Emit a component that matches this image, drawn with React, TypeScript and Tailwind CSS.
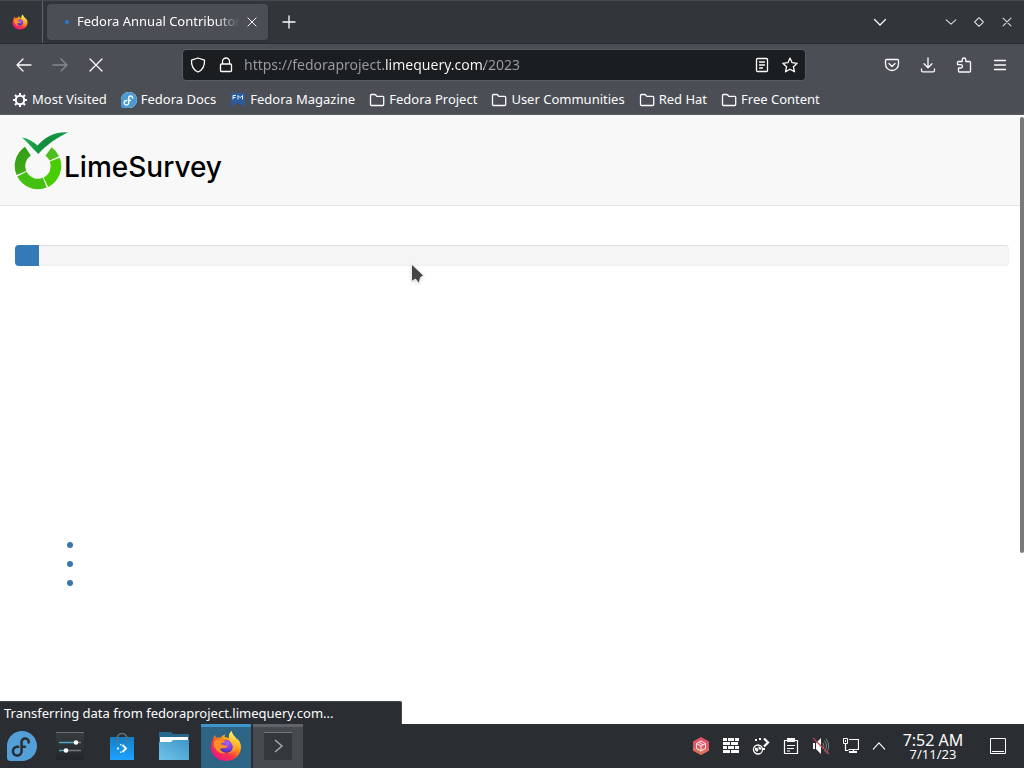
import React, { useState } from "react";
import { SiFedora } from "react-icons/si";

type IconProps = {
    className?: string;
};

type Bookmark = {
    title: string;
    icon: React.ReactNode;
};

function Stroke({ children, className = "size-4" }: IconProps & { children: React.ReactNode }) {
    return (
        <svg viewBox="0 0 16 16" className={className} fill="none" stroke="currentColor" strokeWidth="1.3" strokeLinecap="round" strokeLinejoin="round" aria-hidden="true">
            {children}
        </svg>
    );
}

function FirefoxIcon({ className }: IconProps) {
    return (
        <svg viewBox="0 0 32 32" className={className} aria-hidden="true">
            <defs>
                <linearGradient id="fxBody" x1="0.85" y1="0.1" x2="0.2" y2="0.95">
                    <stop offset="0" stopColor="#fff44f" />
                    <stop offset="0.35" stopColor="#ff980e" />
                    <stop offset="0.65" stopColor="#ff3647" />
                    <stop offset="1" stopColor="#e31587" />
                </linearGradient>
                <linearGradient id="fxFlame" x1="0.6" y1="0" x2="0.4" y2="1">
                    <stop offset="0" stopColor="#fff36e" />
                    <stop offset="0.5" stopColor="#ffbd2e" />
                    <stop offset="1" stopColor="#ff7139" />
                </linearGradient>
                <radialGradient id="fxGlobe" cx="0.6" cy="0.25" r="0.8">
                    <stop offset="0" stopColor="#b05cff" />
                    <stop offset="0.6" stopColor="#6e3fd8" />
                    <stop offset="1" stopColor="#45278d" />
                </radialGradient>
            </defs>
            <path fill="url(#fxBody)" d="M3.4 8.5c.3-1.8 1-3 1.5-3.500.3 1.300 1 2.300 1.900 3 1.200-.5 2.700-.6 4-.3C12 6 13.500 5 15.200 4.600c-.5.9-.6 1.700-.5 2.400L19 8c-.2-3 .8-5.500 2.800-7 .2 3 1.700 4.300 3.700 6.400.9.900 1.500 1.900 1.900 2.800 0-.8-.1-1.400-.4-2 2.500 2.300 4 5.500 4 8.900 0 8-6.500 14-15 14S1 25 1 17.500c0-3.500 1-6.600 2.400-9z" />
            <circle cx="16.200" cy="16.500" r="6.700" fill="url(#fxGlobe)" />
            <path fill="url(#fxFlame)" d="M21.800 1c.2 3 1.700 4.300 3.700 6.400 3.200 3.600 2.800 10.200-.9 13.600-2.400 2.200-5.800 2.800-8.600 1.700 4.400.1 7.100-2.600 6.900-6-.2-3.700-4.500-5.200-4-10.200.1-2.300 1.200-4.300 2.900-5.500z" />
            <path fill="#ff9124" d="M4.200 11.500c1.600-2 4.700-2.600 6.900-1.500 1.500-.3 3 .2 4 1.400-.4 1-1.700 1.300-3.100 1.600-.9.300-1 1-.9 1.700 1.300-.3 2.600.2 3.600.8 1 .5 2.300.4 3.200-.1-.8 1.900-2.200 2.600-4.100 2.700-1.600.1-2.600.7-4 .7 1.300 2.700 4.100 4.300 7.200 4-4.700 2.300-11.500-.8-12-6.200-.4.400-.7 1.200-.8 1.900-.5-2.700-.6-4.900 0-7z" />
        </svg>
    );
}

function arc(from: number, to: number) {
    const cx = 24;
    const cy = 36;
    const r = 18;
    const point = (deg: number) => {
        const a = (deg * Math.PI) / 180;
        return `${(cx + r * Math.cos(a)).toFixed(2)} ${(cy + r * Math.sin(a)).toFixed(2)}`;
    };
    return `M${point(from)}A${r} ${r} 0 0 1 ${point(to)}`;
}

function LimeLogo() {
    return (
        <svg viewBox="0 0 54 60" className="h-[60px] w-[54px]" fill="none" aria-hidden="true">
            <defs>
                <linearGradient id="limeLeft" x1="0" y1="0" x2="0.3" y2="1">
                    <stop offset="0" stopColor="#349c18" />
                    <stop offset="1" stopColor="#3fac14" />
                </linearGradient>
                <linearGradient id="limeCheck" x1="0" y1="0" x2="1" y2="0">
                    <stop offset="0" stopColor="#22b14c" />
                    <stop offset="0.5" stopColor="#118a3c" />
                    <stop offset="1" stopColor="#15a04a" />
                </linearGradient>
            </defs>
            <path d={arc(-54, -25)} stroke="#4cbf1c" strokeWidth="10.500" />
            <path d={arc(-21, 64)} stroke="#48cc02" strokeWidth="10.500" />
            <path d={arc(68, 153)} stroke="#43c010" strokeWidth="10.500" />
            <path d={arc(157, 236)} stroke="url(#limeLeft)" strokeWidth="10.500" />
            <path d="M8 7.500c6 1 11.500 4 15.500 8C30 8 40 1.500 54 2.300 43 8 32 15 24.300 24 19.500 19.500 14 12.500 8 7.500z" fill="url(#limeCheck)" />
        </svg>
    );
}

function FolderIcon() {
    return (
        <Stroke>
            <path d="M1.500 12.500v-9q0-1 1-1h3.200q.6 0 1 .5l1 1.300h6q1 0 1 1v7.200q0 1-1 1H2.500q-1 0-1-1z" />
        </Stroke>
    );
}

const bookmarks: Bookmark[] = [
    {
        title: "Most Visited",
        icon: (
            <svg viewBox="0 0 16 16" className="size-4" fill="none" stroke="currentColor" aria-hidden="true">
                <circle cx="8" cy="8" r="4.200" strokeWidth="2" />
                <path strokeWidth="2" d="M8 1v3M8 12v3M1 8h3M12 8h3M3 3l2.200 2.200M10.800 10.800 13 13M3 13l2.200-2.200M10.800 5.200 13 3" />
            </svg>
        ),
    },
    {
        title: "Fedora Docs",
        icon: (
            <span className="block size-4 rounded-full bg-white">
                <SiFedora className="size-4 text-[#4a9bd4]" />
            </span>
        ),
    },
    {
        title: "Fedora Magazine",
        icon: (
            <svg viewBox="0 0 16 16" className="size-4" aria-hidden="true">
                <path d="M1 1h14v14l-7-4-7 4z" fill="#2c5a9c" />
                <path d="M3 7.500V3.500h3M3 5.500h2.500M8 7.500v-4l2.200 2.200 2.300-2.200v4" fill="none" stroke="#dff3fb" strokeWidth="1" />
            </svg>
        ),
    },
    { title: "Fedora Project", icon: <FolderIcon /> },
    { title: "User Communities", icon: <FolderIcon /> },
    { title: "Red Hat", icon: <FolderIcon /> },
    { title: "Free Content", icon: <FolderIcon /> },
];

function TabBar() {
    return (
        <div className="flex h-11 items-center border-t border-[#454a4f] border-b border-b-[#272b30] bg-[#31363b]">
            <button aria-label="Firefox View" className="flex h-full w-[43px] items-center justify-center border-r border-[#60646a] pr-0.5">
                <FirefoxIcon className="size-4" />
            </button>
            <div className="ml-1 flex h-9 w-[221px] items-center rounded bg-[#4b4f55] pl-[18px] shadow">
                <span className="size-1 shrink-0 rounded-full bg-[#2a79d8]" />
                <span className="ml-2 flex-1 overflow-hidden whitespace-nowrap mask-r-from-85%">Fedora Annual Contributor</span>
                <button aria-label="Close tab" className="flex w-7 justify-center pr-1">
                    <Stroke className="size-3"><path d="m2.500 2.500 11 11M13.500 2.500l-11 11" /></Stroke>
                </button>
            </div>
            <button aria-label="New tab" className="flex w-[42px] justify-center">
                <Stroke><path d="M8 2v12M2 8h12" /></Stroke>
            </button>
            <button aria-label="List all tabs" className="mr-[39px] ml-auto flex w-9 justify-center">
                <Stroke><path d="m2.500 5.500 5.500 5.500 5.500-5.500" /></Stroke>
            </button>
            <div className="flex pr-[3px] text-[#d8dadc]">
                <button aria-label="Minimize" className="flex w-7 justify-center">
                    <Stroke className="size-3.5"><path d="m2.500 5.500 5.500 5 5.500-5" /></Stroke>
                </button>
                <button aria-label="Maximize" className="flex w-7 justify-center">
                    <Stroke className="size-3.5"><path d="m8 3 5 5-5 5-5-5z" /></Stroke>
                </button>
                <button aria-label="Close" className="flex w-7 justify-center">
                    <Stroke className="size-3.5"><path d="m3.500 3.500 9 9M12.500 3.500l-9 9" /></Stroke>
                </button>
            </div>
        </div>
    );
}

function NavBar() {
    const [url, setUrl] = useState("https://fedoraproject.limequery.com/2023");

    return (
        <div className="flex h-[41px] items-center px-1.5">
            <button aria-label="Back" className="flex w-9 justify-center">
                <Stroke><path d="M15 8H1.500M7 2 1 8l6 6" /></Stroke>
            </button>
            <button aria-label="Forward" className="flex w-9 justify-center text-[#86898d]">
                <Stroke><path d="M1 8h13.500M9 2l6 6-6 6" /></Stroke>
            </button>
            <button aria-label="Stop" className="flex w-9 justify-center">
                <Stroke><path d="m2 2 12 12M14 2 2 14" /></Stroke>
            </button>
            <div className="mx-[68px] flex h-8 flex-1 items-center rounded border border-[#5a5e64] bg-[#1b1e20] px-[7px]">
                <Stroke className="mr-3 size-4"><path d="M8 1 14.500 3.200c.3 5-1.500 9.500-6.500 11.800C3 12.700 1.200 8.200 1.500 3.200z" /></Stroke>
                <Stroke className="mr-2.5 size-4"><path d="M4.500 7V4.500a3.500 3.500 0 0 1 7 0V7M3.500 7h9q1 0 1 1v5.500q0 1-1 1h-9q-1 0-1-1V8q0-1 1-1z" /></Stroke>
                <input
                    aria-label="Address"
                    value={url}
                    onChange={e => setUrl(e.target.value)}
                    className="min-w-0 flex-1 bg-[linear-gradient(to_right,#9b9da0_142px,#fcfcfc_142px,#fcfcfc_240px,#9b9da0_240px)] bg-clip-text text-sm text-transparent caret-white outline-none"
                />
                <button aria-label="Reader view" className="mr-3">
                    <Stroke><path d="M3.500 1.500h9q1 0 1 1v11q0 1-1 1h-9q-1 0-1-1v-11q0-1 1-1zM5.500 5h5M5.500 8h5M5.500 11h3" /></Stroke>
                </button>
                <button aria-label="Bookmark this page">
                    <Stroke><path d="m8 1 2.100 4.700 5.100.6-3.800 3.400 1.100 5.100L8 12.200l-4.500 2.600 1.100-5.100L.8 6.300l5.100-.6z" /></Stroke>
                </button>
            </div>
            <button aria-label="Pocket" className="flex w-9 justify-center">
                <Stroke><path d="M2.500 2.500h11q1 0 1 1V7a6.500 6.500 0 0 1-13 0V3.500q0-1 1-1zM5 6.500l3 3 3-3" /></Stroke>
            </button>
            <button aria-label="Downloads" className="flex w-9 justify-center">
                <Stroke><path d="M8 .8v9.700M4 6.800l4 4 4-4M1.500 12v1.500q0 1.300 1.300 1.300h10.400q1.300 0 1.300-1.300V12" /></Stroke>
            </button>
            <button aria-label="Extensions" className="flex w-9 justify-center">
                <Stroke><path d="M2.500 4.500h3.700V2.800a1.800 1.800 0 0 1 3.600 0v1.700h3.700q1 0 1 1v8.700q0 .8-1 .8h-10q-1 0-1-1v-3h2.300a1.600 1.600 0 0 0 0-3.300H1.500V5.500q0-1 1-1z" /></Stroke>
            </button>
            <button aria-label="Menu" className="flex w-9 justify-center">
                <Stroke><path d="M2.500 3.500h11M2.500 8h11M2.500 12.500h11" /></Stroke>
            </button>
        </div>
    );
}

function Page() {
    return (
        <main className="relative flex-1 bg-white">
            <header className="flex h-[91px] items-center border-b border-[#e3e3e3] bg-[#f8f8f8] px-3.5">
                <a href="#" className="flex items-center text-black">
                    <LimeLogo />
                    <span className="mt-3.5 -ml-1 font-[Inter,sans-serif] text-[28px] leading-9 font-medium">LimeSurvey</span>
                </a>
            </header>
            <div className="px-[15px] pt-[39px]">
                <div role="progressbar" aria-label="Survey progress" aria-valuenow={2} className="h-[21px] rounded border border-t-[#dedede] border-[#f0f0f0] bg-[#f5f5f5]">
                    <div className="-m-px h-[21px] w-6 rounded-l bg-[#337ab7]" />
                </div>
            </div>
            <ul className="mt-[276px] flex flex-col gap-[13px] pl-[67px]">
                <li className="size-1.5 rounded-full bg-[#3a76ab]" />
                <li className="size-1.5 rounded-full bg-[#3a76ab]" />
                <li className="size-1.5 rounded-full bg-[#3a76ab]" />
            </ul>
            <div className="absolute top-0.5 right-0 h-[436px] w-1 rounded-sm bg-[#77797b]" />
            <svg viewBox="0 0 14 22" className="absolute top-[148px] left-[410px] h-[22px] w-3.5 drop-shadow" aria-hidden="true">
                <path d="M1.500 1v17.500L5.500 16l3.500 4.500 1.500-6 3-2z" fill="#434547" stroke="#fff" strokeWidth="0.800" />
            </svg>
            <div role="status" className="absolute bottom-0 left-0 h-[23px] w-[402px] rounded-tr-xs border-t border-r border-[#44484c] bg-[#2a2e32] pl-1 leading-[22px]">
                Transferring data from fedoraproject.limequery.com...
            </div>
        </main>
    );
}

function Taskbar() {
    return (
        <footer className="flex h-11 items-stretch bg-[#2a2e32]">
            <div className="flex gap-0.5">
                <button aria-label="Application launcher" className="flex w-[43px] items-center justify-center">
                    <SiFedora className="size-[30px] text-[#549fd8]" />
                </button>
                <button aria-label="System Settings" className="flex w-[50px] items-center justify-center">
                    <svg viewBox="0 0 28 28" className="size-7" aria-hidden="true">
                        <defs>
                            <linearGradient id="tile" x1="0" y1="0" x2="0" y2="1">
                                <stop offset="0" stopColor="#383c3f" />
                                <stop offset="1" stopColor="#23272a" />
                            </linearGradient>
                        </defs>
                        <path d="M0 0h28v28H0z" fill="url(#tile)" />
                        <path d="M0 .5h28" stroke="#6a6e71" />
                        <path d="M3 10.500h15M3 18.500h7" stroke="#4fa6c8" strokeWidth="1.500" />
                        <path d="M20 10.500h5M10 18.500h15" stroke="#777c80" strokeWidth="1.500" />
                        <circle cx="20" cy="10.500" r="2.300" fill="#fff" />
                        <circle cx="10" cy="18.500" r="2.300" fill="#fff" />
                    </svg>
                </button>
                <button aria-label="Discover" className="flex w-[50px] items-center justify-center">
                    <svg viewBox="0 0 28 28" className="size-7" aria-hidden="true">
                        <defs>
                            <linearGradient id="bag" x1="0" y1="0" x2="0" y2="1">
                                <stop offset="0" stopColor="#157fc4" />
                                <stop offset="1" stopColor="#1fa2ff" />
                            </linearGradient>
                        </defs>
                        <path d="M2 5h24v23H2z" fill="url(#bag)" />
                        <path d="M9 11V6.500a5 5 0 0 1 10 0V11" fill="none" stroke="#5b7383" strokeWidth="1.500" />
                        <path d="m14.500 13 3.500 3.500-3.500 3.500" fill="none" stroke="#fff" strokeWidth="1.800" />
                        <path d="M9 15.500h2v2H9zM12 12h1.500v1.500H12zM12 19.500h1.500V21H12z" fill="#e4f5ff" />
                    </svg>
                </button>
                <button aria-label="Dolphin" className="flex w-[50px] items-center justify-center">
                    <svg viewBox="0 0 30 28" className="h-7 w-[30px]" aria-hidden="true">
                        <defs>
                            <linearGradient id="folder" x1="0" y1="1" x2="1" y2="0">
                                <stop offset="0" stopColor="#6fc5ea" />
                                <stop offset="1" stopColor="#3f96c6" />
                            </linearGradient>
                        </defs>
                        <path d="M0 0h12l2 2h16v22H0z" fill="#28688e" />
                        <path d="M1 5h28v8H1z" fill="#fff" />
                        <path d="M0 10h12l2-2h16v20H0z" fill="url(#folder)" />
                    </svg>
                </button>
                <button aria-label="Firefox" className="flex w-[50px] items-center justify-center border-t-3 border-[#3f96cc] bg-[#2e6484] pb-1">
                    <FirefoxIcon className="size-8" />
                </button>
                <button aria-label="Konsole" className="flex w-[50px] items-center justify-center border-t-3 border-[#606468] bg-[#474b4f] pb-1">
                    <svg viewBox="0 0 28 28" className="size-7" aria-hidden="true">
                        <path d="M0 0h28v28H0z" fill="#34383b" />
                        <path d="M0 .5h28" stroke="#73777a" />
                        <path d="m11 8 7 6-7 6" fill="none" stroke="#a5a9ac" strokeWidth="1.500" />
                    </svg>
                </button>
            </div>
            <div className="ml-auto flex items-center pr-0.5">
                <button aria-label="Package updates" className="flex w-[30px] justify-center">
                    <svg viewBox="0 0 18 18" className="size-[18px]" fill="none" aria-hidden="true">
                        <path d="m9 0 8 4.500v9L9 18l-8-4.500v-9z" fill="#e2566a" />
                        <path d="M1 11v2.500L9 18l8-4.500V11z" fill="#d9705c" />
                        <path d="m9 4 4.500 2.500v5L9 14l-4.500-2.500v-5zM4.500 6.500 9 9l4.500-2.500M9 9v5M6.700 5.300l4.500 2.500" stroke="#ffe9ed" />
                    </svg>
                </button>
                <button aria-label="Firewall" className="flex w-[30px] justify-center">
                    <svg viewBox="0 0 16 16" className="size-4" fill="#fcfcfc" aria-hidden="true">
                        <path d="M0 0h4v3H0zM5 0h6v3H5zM12 0h4v3h-4zM0 4h7v3H0zM8 4h7v3H8zM0 8h4v3H0zM5 8h6v3H5zM12 8h4v3h-4zM0 12h7v3H0zM8 12h8v3H8z" />
                    </svg>
                </button>
                <button aria-label="Input method" className="flex w-[30px] justify-center">
                    <svg viewBox="0 0 18 18" className="size-[18px]" fill="none" stroke="#fcfcfc" aria-hidden="true">
                        <circle cx="6" cy="12.500" r="4.500" strokeWidth="1.300" />
                        <path d="M3 10.500 5.500 11l1 2L5 15l-2-2zM6.500 9l3 2-1 2-2-1z" fill="#fcfcfc" stroke="none" />
                        <path d="M3 2h2v2H3zM7 1h2v2H7zM11 11h2v2h-2z" fill="#fcfcfc" stroke="none" />
                        <path d="m12 1.500 4 4-4 4" strokeWidth="2.200" />
                    </svg>
                </button>
                <button aria-label="Clipboard" className="flex w-[30px] justify-center">
                    <svg viewBox="0 0 16 16" className="size-4" fill="none" stroke="#fcfcfc" aria-hidden="true">
                        <path d="M1.500 2.500h13v13h-13z" strokeWidth="1.200" />
                        <path d="M4 0h8v4H4z" fill="#fcfcfc" stroke="none" />
                        <path d="M4 7.500h8M4 10.500h7M4 13h3" />
                    </svg>
                </button>
                <button aria-label="Muted" className="flex w-[30px] justify-center">
                    <svg viewBox="0 0 18 18" className="size-[18px]" fill="none" aria-hidden="true">
                        <path d="M1 6h2v6H1zM4 6l5-5v16l-5-5z" fill="#fcfcfc" />
                        <path d="M11 6q2 3 0 6M12.500 3.500q4 5.500 0 11M14 1.500q5.500 7.500 0 15" stroke="#7c8083" />
                        <path d="m1 1 16 16" stroke="#b84450" strokeWidth="1.200" />
                    </svg>
                </button>
                <button aria-label="Network" className="flex w-[30px] justify-center">
                    <svg viewBox="0 0 16 16" className="size-4" fill="none" stroke="#fcfcfc" aria-hidden="true">
                        <path d="M6 1.500h9.500v10H5.500M2.500 6v6.500h3M10.500 12v3M6 14.500h8" strokeWidth="1.200" />
                        <path d="M.5.500h4v5h-4zM2.500 2v2" />
                        <path d="M6 13h8v2H6z" fill="#fcfcfc" stroke="none" />
                    </svg>
                </button>
                <button aria-label="Show hidden icons" className="flex w-[26px] justify-center">
                    <Stroke className="size-3.5"><path d="m1.500 11.500 6.500-7 6.500 7" /></Stroke>
                </button>
                <div className="flex w-[82px] flex-col items-center">
                    <span className="text-base leading-4">7:52 AM</span>
                    <span className="text-[13px] leading-3">7/11/23</span>
                </div>
                <button aria-label="Show desktop" className="flex w-12 justify-center">
                    <svg viewBox="0 0 16 16" className="size-4" fill="none" stroke="#fcfcfc" aria-hidden="true">
                        <path d="M.5.500h15v15H.5zM2 13.500h12" />
                    </svg>
                </button>
            </div>
        </footer>
    );
}

function App() {
    return (
        <div className="flex min-h-screen flex-col bg-[#4b4f55] font-['Noto_Sans',sans-serif] text-[13px] text-[#fcfcfc]">
            <TabBar />
            <NavBar />
            <nav className="flex h-[30px] items-center gap-3.5 border-b border-[#5b5d60] px-3">
                {bookmarks.map(bookmark => (
                    <a key={bookmark.title} href="#" className="flex items-center gap-1 whitespace-nowrap">
                        {bookmark.icon}
                        {bookmark.title}
                    </a>
                ))}
            </nav>
            <Page />
            <Taskbar />
        </div>
    );
}

export default App;
